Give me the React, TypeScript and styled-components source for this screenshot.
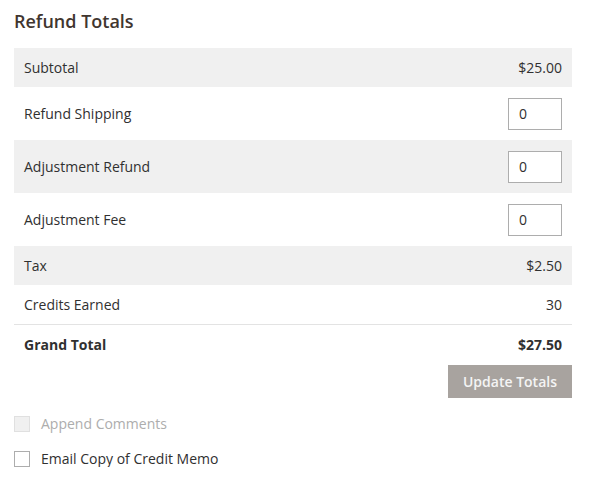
import React from "react";
import styled, { createGlobalStyle } from "styled-components";

const Global = createGlobalStyle`
  html, body { margin: 0; padding: 0; background: #fff; }
  body { font-family: "Open Sans", "Noto Sans", sans-serif; color: #303030; }
  * { box-sizing: border-box; }
`;

const Section = styled.section`
  width: 572px;
  padding: 9px 0 0 14px;
`;

const Title = styled.h2`
  margin: 0 0 15px;
  font-size: 18px;
  line-height: 24px;
  font-weight: 600;
  color: #41362f;
`;

const Table = styled.div`
  display: flex;
  flex-direction: column;
  width: 558px;
`;

const Row = styled.div<{ $shaded?: boolean; $h: number; $border?: boolean }>`
  display: flex;
  align-items: center;
  justify-content: space-between;
  height: ${(p) => p.$h}px;
  padding: 0 10px;
  background: ${(p) => (p.$shaded ? "#f0f0f0" : "transparent")};
  border-top: ${(p) => (p.$border ? "1px solid #e3e3e3" : "none")};
  font-size: 14px;
`;

const Label = styled.span<{ $bold?: boolean }>`
  font-weight: ${(p) => (p.$bold ? 700 : 400)};
  color: #303030;
`;

const Value = styled.span<{ $bold?: boolean }>`
  font-weight: ${(p) => (p.$bold ? 700 : 400)};
  color: #303030;
`;

const Input = styled.input`
  width: 54px;
  height: 32px;
  border: 1px solid #adadad;
  padding: 0 10px;
  font-family: inherit;
  font-size: 14px;
  color: #303030;
  background: #fff;
  outline: none;
`;

const Actions = styled.div`
  display: flex;
  justify-content: flex-end;
  width: 558px;
  margin-top: 1px;
`;

const Button = styled.button`
  height: 33px;
  padding: 0 15px;
  border: none;
  background: #a8a39f;
  color: #f4f4f4;
  font-family: inherit;
  font-size: 14px;
  font-weight: 600;
  cursor: default;
`;

const Checks = styled.div`
  display: flex;
  flex-direction: column;
  gap: 19px;
  margin-top: 18px;
`;

const CheckRow = styled.label<{ $disabled?: boolean }>`
  display: flex;
  align-items: center;
  gap: 11px;
  font-size: 14px;
  line-height: 16px;
  color: ${(p) => (p.$disabled ? "#adadad" : "#303030")};
`;

const Box = styled.span<{ $disabled?: boolean }>`
  width: 16px;
  height: 16px;
  border: 1px solid ${(p) => (p.$disabled ? "#e0e0e0" : "#adadad")};
  background: ${(p) => (p.$disabled ? "#f0f0f0" : "#fff")};
  flex: none;
`;

export default function App() {
  return (
    <>
      <Global />
      <Section>
        <Title>Refund Totals</Title>
        <Table>
          <Row $shaded $h={39}>
            <Label>Subtotal</Label>
            <Value>$25.00</Value>
          </Row>
          <Row $h={53}>
            <Label>Refund Shipping</Label>
            <Input defaultValue="0" />
          </Row>
          <Row $shaded $h={53}>
            <Label>Adjustment Refund</Label>
            <Input defaultValue="0" />
          </Row>
          <Row $h={53}>
            <Label>Adjustment Fee</Label>
            <Input defaultValue="0" />
          </Row>
          <Row $shaded $h={39}>
            <Label>Tax</Label>
            <Value>$2.50</Value>
          </Row>
          <Row $h={39}>
            <Label>Credits Earned</Label>
            <Value>30</Value>
          </Row>
          <Row $h={40} $border>
            <Label $bold>Grand Total</Label>
            <Value $bold>$27.50</Value>
          </Row>
        </Table>
        <Actions>
          <Button>Update Totals</Button>
        </Actions>
        <Checks>
          <CheckRow $disabled>
            <Box $disabled />
            Append Comments
          </CheckRow>
          <CheckRow>
            <Box />
            Email Copy of Credit Memo
          </CheckRow>
        </Checks>
      </Section>
    </>
  );
}
